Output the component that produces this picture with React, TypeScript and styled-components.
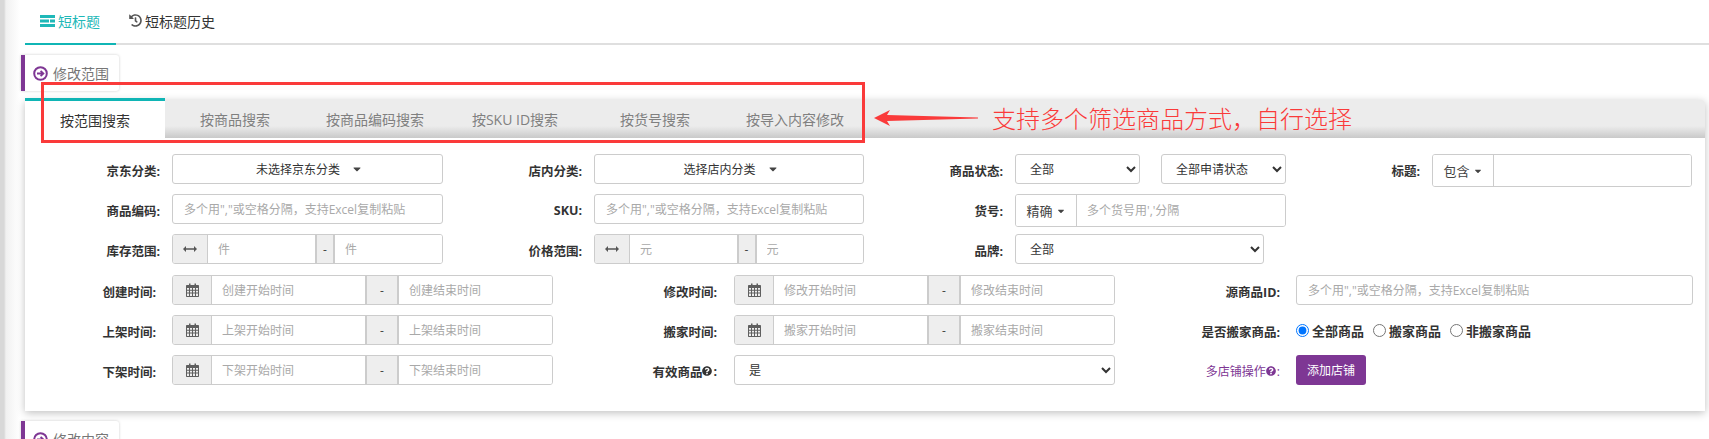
import React from "react";
import styled, { createGlobalStyle } from "styled-components";
import { FaHistory, FaQuestionCircle, FaCaretDown } from "react-icons/fa";

const Global = createGlobalStyle`
  html, body { margin: 0; padding: 0; background: #fff; }
  body { font-family: "Open Sans", "Noto Sans CJK SC", sans-serif; font-size: 12px; color: #333; }
  * { box-sizing: border-box; }
`;

const Page = styled.div`
  position: relative;
  height: 439px;
  overflow: hidden;
  background: linear-gradient(to right, #d8d8d8 0, #d8d8d8 4px, #f1f1f1 6px, #fff 20px);
`;

const TopNav = styled.div`
  margin-left: 25px;
  height: 45px;
  display: flex;
  border-bottom: 2px solid #dfdfdf;
`;

const TopTab = styled.div<{ $active?: boolean }>`
  height: 45px;
  width: ${(p) => (p.$active ? "91px" : "auto")};
  padding-left: ${(p) => (p.$active ? "15px" : "13px")};
  display: flex;
  align-items: center;
  gap: 3px;
  padding-bottom: 2px;
  font-size: 14px;
  color: ${(p) => (p.$active ? "#1fb8b8" : "#333")};
  border-bottom: 2px solid ${(p) => (p.$active ? "#10b5b5" : "transparent")};
  svg { flex: none; }
`;

const SectionTag = styled.div`
  margin: 10px 0 0 21px;
  width: 98px;
  height: 36px;
  display: flex;
  align-items: center;
  gap: 5px;
  padding-left: 8px;
  font-size: 14px;
  color: #777;
  background: #fff;
  border-left: 4px solid #7e3794;
  border-radius: 0 3px 3px 0;
  box-shadow: 0 0 3px rgba(0, 0, 0, 0.2);
  svg { color: #7e3794; flex: none; }
`;

const Card = styled.div`
  margin: 9px 0 0 25px;
  width: 1680px;
  background: #fff;
  border-radius: 3px 3px 0 0;
  box-shadow: 0 2px 8px rgba(0, 0, 0, 0.25);
`;

const TabBar = styled.div`
  height: 38px;
  display: flex;
  background: linear-gradient(to bottom, #ececec 0, #ececec 26px, #c9c9c9 38px);
  border-radius: 3px 3px 0 0;
`;

const Tab = styled.div<{ $active?: boolean }>`
  width: 140px;
  height: ${(p) => (p.$active ? "40px" : "38px")};
  margin-top: ${(p) => (p.$active ? "-2px" : "0")};
  display: flex;
  align-items: center;
  justify-content: center;
  font-size: 14px;
  color: ${(p) => (p.$active ? "#333" : "#808080")};
  background: ${(p) => (p.$active ? "#fff" : "transparent")};
  border-top: ${(p) => (p.$active ? "3px solid #10b5b5" : "none")};
`;

const Body = styled.div`
  height: 273px;
  padding-top: 16px;
  display: flex;
  flex-direction: column;
`;

const Row = styled.div`
  display: grid;
  align-items: start;
  height: 30px;
  margin-bottom: 10px;
`;

const WideRow = styled(Row)`
  grid-template-columns: 147px 271px 151px 270px 151px 271px 146px 260px;
`;

const LongRow = styled(Row)<{ $first?: boolean }>`
  margin-top: ${(p) => (p.$first ? "1px" : "0")};
  grid-template-columns: 147px 381px 181px 381px 181px 397px;
`;

const Label = styled.label<{ $accent?: boolean; $pad?: number }>`
  height: 30px;
  padding: 2px ${(p) => p.$pad ?? 12}px 0 0;
  display: flex;
  align-items: center;
  justify-content: flex-end;
  font-size: ${(p) => (p.$accent ? "12px" : "12.5px")};
  font-weight: ${(p) => (p.$accent ? 400 : 700)};
  color: ${(p) => (p.$accent ? "#7e3794" : "#333")};
  svg { margin: 0 1px 0 0; }
`;

const TextInput = styled.input`
  width: 100%;
  height: 30px;
  padding: 0 11px;
  font: 12px "Open Sans", "Noto Sans CJK SC", sans-serif;
  color: #333;
  border: 1px solid #ccc;
  border-radius: 3px;
  outline: none;
  &::placeholder { color: #a9a9a9; opacity: 1; }
`;

const Dropdown = styled.div`
  height: 30px;
  display: flex;
  align-items: center;
  justify-content: center;
  gap: 11px;
  padding-left: 4px;
  font-size: 12px;
  color: #333;
  background: #fff;
  border: 1px solid #ccc;
  border-radius: 3px;
`;

const Select = styled.select<{ $width?: number }>`
  width: ${(p) => (p.$width ? `${p.$width}px` : "100%")};
  height: 30px;
  padding: 0 10px;
  font: 12px "Open Sans", "Noto Sans CJK SC", sans-serif;
  color: #333;
  background: #fff;
  border: 1px solid #ccc;
  border-radius: 3px;
  outline: none;
`;

const SelectPair = styled.div`
  display: grid;
  grid-template-columns: 125px 125px;
  column-gap: 21px;
`;

const Group = styled.div<{ $tall?: boolean }>`
  height: ${(p) => (p.$tall ? "33px" : "30px")};
  display: flex;
  border: 1px solid #ccc;
  border-radius: 3px;
  overflow: hidden;
  background: #fff;
`;

const Addon = styled.span<{ $width: number; $plain?: boolean }>`
  flex: 0 0 ${(p) => p.$width}px;
  display: flex;
  align-items: center;
  justify-content: center;
  gap: 3px;
  font-size: ${(p) => (p.$plain ? "13px" : "12px")};
  color: #444;
  background: ${(p) => (p.$plain ? "#fff" : "#eee")};
  border-right: 1px solid #ccc;
`;

const Dash = styled(Addon)`
  border-left: 2px solid #ccc;
  border-right: 2px solid #ccc;
`;

const GroupInput = styled.input`
  flex: 1;
  min-width: 0;
  height: 100%;
  padding: 0 10px;
  font: 12px "Open Sans", "Noto Sans CJK SC", sans-serif;
  border: none;
  outline: none;
  &::placeholder { color: #a9a9a9; opacity: 1; }
`;

const RadioRow = styled.div`
  height: 30px;
  display: flex;
  align-items: center;
  gap: 9px;
`;

const RadioItem = styled.label`
  display: flex;
  align-items: center;
  gap: 3px;
  font-size: 13px;
  font-weight: 700;
  color: #333;
  input { margin: 0; width: 13px; height: 13px; }
`;

const PurpleButton = styled.button`
  width: 70px;
  height: 30px;
  padding: 0;
  font: 12px "Open Sans", "Noto Sans CJK SC", sans-serif;
  color: #fff;
  background: #7e3794;
  border: none;
  border-radius: 3px;
`;

const Highlight = styled.div`
  position: absolute;
  left: 41px;
  top: 82px;
  width: 824px;
  height: 61px;
  border: 3px solid #fa3a3a;
  pointer-events: none;
`;

const Callout = styled.div`
  position: absolute;
  left: 874px;
  top: 99px;
  display: flex;
  align-items: center;
  gap: 14px;
  font-size: 24px;
  line-height: 38px;
  color: #fa3a3a;
  font-family: "Noto Sans CJK SC", sans-serif;
  font-weight: 300;
  svg { flex: none; }
`;

const ListIcon = () => (
  <svg width="15" height="12" viewBox="0 0 15 12" fill="currentColor">
    <rect x="0" y="0" width="15" height="3" />
    <rect x="0" y="4.5" width="9" height="3" />
    <rect x="10" y="4.5" width="5" height="3" />
    <rect x="0" y="9" width="15" height="3" />
  </svg>
);

const CircleArrow = () => (
  <svg width="15" height="15" viewBox="0 0 15 15" fill="none" stroke="currentColor">
    <circle cx="7.5" cy="7.5" r="6.3" strokeWidth="2" />
    <path d="M4 7.5H10M7.6 4.8L10.4 7.5L7.6 10.2" strokeWidth="1.8" />
  </svg>
);

const Cal = () => (
  <svg width="13" height="14" viewBox="0 0 13 14" fill="#5f5f5f">
    <path fillRule="evenodd" d="M1 2H3V0.5H4.5V2H8.5V0.5H10V2H12C12.6 2 13 2.4 13 3V13C13 13.6 12.6 14 12 14H1C0.4 14 0 13.6 0 13V3C0 2.4 0.4 2 1 2ZM1 5V6.8H3V5ZM4 5V6.8H6V5ZM7 5V6.8H9V5ZM10 5V6.8H12V5ZM1 7.8V9.6H3V7.8ZM4 7.8V9.6H6V7.8ZM7 7.8V9.6H9V7.8ZM10 7.8V9.6H12V7.8ZM1 10.6V13H3V10.6ZM4 10.6V13H6V10.6ZM7 10.6V13H9V10.6ZM10 10.6V13H12V10.6Z" />
  </svg>
);

const ArrowsH = () => (
  <svg width="14" height="8" viewBox="0 0 14 8" fill="#555">
    <path d="M0 4L3 1V3.2H11V1L14 4L11 7V4.8H3V7Z" />
  </svg>
);

const DateRange = ({ a, b }: { a: string; b: string }) => (
  <Group>
    <Addon $width={39}><Cal /></Addon>
    <GroupInput placeholder={a} />
    <Dash $width={34}>-</Dash>
    <GroupInput placeholder={b} />
  </Group>
);

const NumRange = ({ unit }: { unit: string }) => (
  <Group>
    <Addon $width={35}><ArrowsH /></Addon>
    <GroupInput placeholder={unit} />
    <Dash $width={20}>-</Dash>
    <GroupInput placeholder={unit} />
  </Group>
);

const PH = '多个用","或空格分隔，支持Excel复制粘贴';

export default function App() {
  return (
    <Page>
      <Global />
      <TopNav>
        <TopTab $active><ListIcon /> 短标题</TopTab>
        <TopTab><FaHistory size={13} color="#555" /> 短标题历史</TopTab>
      </TopNav>
      <SectionTag><CircleArrow />修改范围</SectionTag>
      <Card>
        <TabBar>
          <Tab $active>按范围搜索</Tab>
          <Tab>按商品搜索</Tab>
          <Tab>按商品编码搜索</Tab>
          <Tab>按SKU ID搜索</Tab>
          <Tab>按货号搜索</Tab>
          <Tab>按导入内容修改</Tab>
        </TabBar>
        <Body>
          <WideRow>
            <Label>京东分类:</Label>
            <Dropdown>未选择京东分类 <FaCaretDown size={12} color="#444" /></Dropdown>
            <Label>店内分类:</Label>
            <Dropdown>选择店内分类 <FaCaretDown size={12} color="#444" /></Dropdown>
            <Label>商品状态:</Label>
            <SelectPair>
              <Select defaultValue="全部"><option>全部</option></Select>
              <Select defaultValue="全部申请状态"><option>全部申请状态</option></Select>
            </SelectPair>
            <Label>标题:</Label>
            <Group $tall>
              <Addon $width={61} $plain>包含 <FaCaretDown size={10} color="#444" /></Addon>
              <GroupInput />
            </Group>
          </WideRow>
          <WideRow>
            <Label>商品编码:</Label>
            <TextInput placeholder={PH} />
            <Label>SKU:</Label>
            <TextInput placeholder={PH} />
            <Label>货号:</Label>
            <Group $tall>
              <Addon $width={61} $plain>精确 <FaCaretDown size={10} color="#444" /></Addon>
              <GroupInput placeholder="多个货号用','分隔" />
            </Group>
          </WideRow>
          <WideRow>
            <Label>库存范围:</Label>
            <NumRange unit="件" />
            <Label>价格范围:</Label>
            <NumRange unit="元" />
            <Label>品牌:</Label>
            <Select $width={249} defaultValue="全部"><option>全部</option></Select>
          </WideRow>
          <LongRow $first>
            <Label $pad={16}>创建时间:</Label>
            <DateRange a="创建开始时间" b="创建结束时间" />
            <Label $pad={17}>修改时间:</Label>
            <DateRange a="修改开始时间" b="修改结束时间" />
            <Label $pad={16}>源商品ID:</Label>
            <TextInput placeholder={PH} />
          </LongRow>
          <LongRow>
            <Label $pad={16}>上架时间:</Label>
            <DateRange a="上架开始时间" b="上架结束时间" />
            <Label $pad={17}>搬家时间:</Label>
            <DateRange a="搬家开始时间" b="搬家结束时间" />
            <Label $pad={16}>是否搬家商品:</Label>
            <RadioRow>
              <RadioItem><input type="radio" name="m" defaultChecked />全部商品</RadioItem>
              <RadioItem><input type="radio" name="m" />搬家商品</RadioItem>
              <RadioItem><input type="radio" name="m" />非搬家商品</RadioItem>
            </RadioRow>
          </LongRow>
          <LongRow>
            <Label $pad={16}>下架时间:</Label>
            <DateRange a="下架开始时间" b="下架结束时间" />
            <Label $pad={17}>有效商品<FaQuestionCircle size={10} />:</Label>
            <Select defaultValue="是"><option>是</option></Select>
            <Label $pad={16} $accent>多店铺操作<FaQuestionCircle size={10} />:</Label>
            <div><PurpleButton>添加店铺</PurpleButton></div>
          </LongRow>
        </Body>
      </Card>
      <SectionTag><CircleArrow />修改内容</SectionTag>
      <Highlight />
      <Callout>
        <svg width="104" height="20" viewBox="0 0 104 20">
          <polygon points="0,10 16,2 13,7 104,9.5 104,10.5 13,13 16,18" fill="#fa3a3a" />
        </svg>
        支持多个筛选商品方式，自行选择
      </Callout>
    </Page>
  );
}
